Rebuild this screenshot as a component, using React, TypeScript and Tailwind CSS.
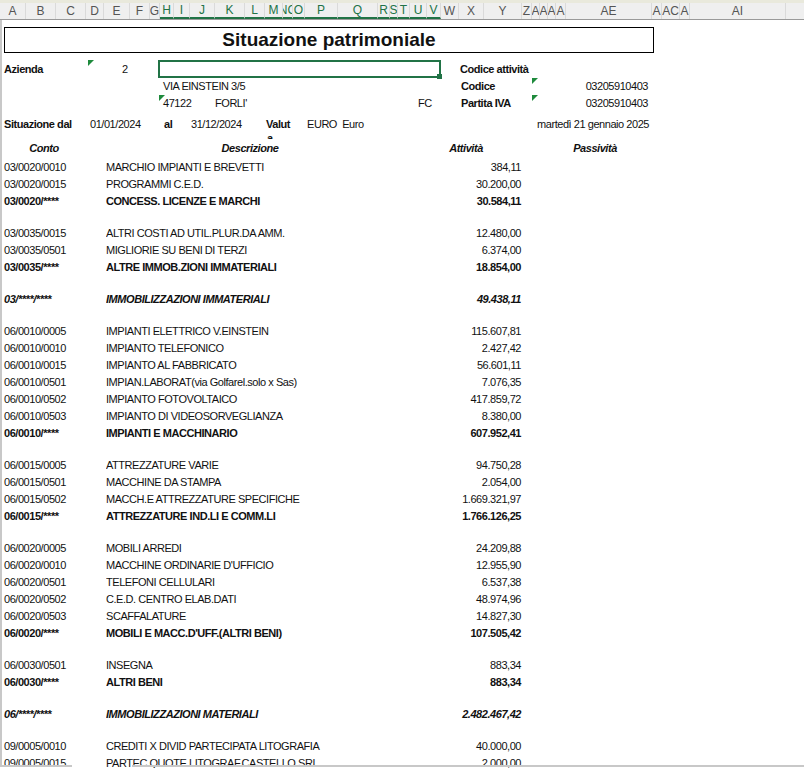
import React from "react";

type Row = [string, string, string, ("n" | "b" | "t")?] | null;

const COLS: [string, number, boolean?][] = [
  ["A", 26], ["B", 30], ["C", 30], ["D", 18], ["E", 26], ["F", 20], ["G", 10],
  ["H", 14, true], ["I", 16, true], ["J", 25, true], ["K", 30, true], ["L", 20, true], ["M", 18, true],
  ["NC", 10, true], ["O", 12, true], ["P", 33, true], ["Q", 40, true], ["R", 12, true], ["S", 8, true],
  ["T", 12, true], ["U", 17, true], ["V", 14, true], ["W", 18], ["X", 25], ["Y", 38], ["Z", 10],
  ["A", 8], ["A", 8], ["A", 8], ["A", 10], ["AE", 86], ["A", 10], ["AC", 18], ["A", 10], ["AI", 96],
];

const ROWS: Row[] = [
  ["03/0020/0010", "MARCHIO IMPIANTI E BREVETTI", "384,11"],
  ["03/0020/0015", "PROGRAMMI C.E.D.", "30.200,00"],
  ["03/0020/****", "CONCESS. LICENZE E MARCHI", "30.584,11", "b"],
  null,
  ["03/0035/0015", "ALTRI COSTI AD UTIL.PLUR.DA AMM.", "12.480,00"],
  ["03/0035/0501", "MIGLIORIE SU BENI DI TERZI", "6.374,00"],
  ["03/0035/****", "ALTRE IMMOB.ZIONI IMMATERIALI", "18.854,00", "b"],
  null,
  ["03/****/****", "IMMOBILIZZAZIONI IMMATERIALI", "49.438,11", "t"],
  null,
  ["06/0010/0005", "IMPIANTI ELETTRICO V.EINSTEIN", "115.607,81"],
  ["06/0010/0010", "IMPIANTO TELEFONICO", "2.427,42"],
  ["06/0010/0015", "IMPIANTO AL FABBRICATO", "56.601,11"],
  ["06/0010/0501", "IMPIAN.LABORAT(via Golfarel.solo x Sas)", "7.076,35"],
  ["06/0010/0502", "IMPIANTO FOTOVOLTAICO", "417.859,72"],
  ["06/0010/0503", "IMPIANTO DI VIDEOSORVEGLIANZA", "8.380,00"],
  ["06/0010/****", "IMPIANTI E MACCHINARIO", "607.952,41", "b"],
  null,
  ["06/0015/0005", "ATTREZZATURE VARIE", "94.750,28"],
  ["06/0015/0501", "MACCHINE DA STAMPA", "2.054,00"],
  ["06/0015/0502", "MACCH.E ATTREZZATURE SPECIFICHE", "1.669.321,97"],
  ["06/0015/****", "ATTREZZATURE IND.LI E COMM.LI", "1.766.126,25", "b"],
  null,
  ["06/0020/0005", "MOBILI ARREDI", "24.209,88"],
  ["06/0020/0010", "MACCHINE ORDINARIE D'UFFICIO", "12.955,90"],
  ["06/0020/0501", "TELEFONI CELLULARI", "6.537,38"],
  ["06/0020/0502", "C.E.D. CENTRO ELAB.DATI", "48.974,96"],
  ["06/0020/0503", "SCAFFALATURE", "14.827,30"],
  ["06/0020/****", "MOBILI E MACC.D'UFF.(ALTRI BENI)", "107.505,42", "b"],
  null,
  ["06/0030/0501", "INSEGNA", "883,34"],
  ["06/0030/****", "ALTRI BENI", "883,34", "b"],
  null,
  ["06/****/****", "IMMOBILIZZAZIONI MATERIALI", "2.482.467,42", "t"],
  null,
  ["09/0005/0010", "CREDITI X DIVID PARTECIPATA LITOGRAFIA", "40.000,00"],
  ["09/0005/0015", "PARTEC.QUOTE LITOGRAF.CASTELLO SRL", "2.000,00"],
];

// green error-check marker in the cell's top-left corner
function Tri() {
  return <span className="inline-block h-0 w-0 border-r-[6px] border-t-[6px] border-r-transparent border-t-[#1e8a3c] align-top" />;
}

export default function App() {
  return (
    <div
      className="relative h-[768px] w-[804px] overflow-hidden bg-white text-[11px] tracking-[-0.45px] text-[#111]"
      style={{ fontFamily: '"Liberation Sans", Arial, sans-serif' }}
    >
      <div className="h-[3px] bg-[#e9e9dc]" />
      <div className="flex h-[17px] border-b border-[#9a9a9a] bg-[#efefef] text-[12px] tracking-normal">
        {COLS.map(([l, w, sel], i) => (
          <div
            key={i}
            style={{ width: w }}
            className={`flex shrink-0 items-center justify-center overflow-hidden whitespace-nowrap border-r border-[#dadada] ${
              sel ? "border-b-2 border-b-[#217346] text-[#217346]" : "text-[#555]"
            }`}
          >
            {l}
          </div>
        ))}
      </div>

      <div className="h-[745px] border-l-2 border-[#c8c8c8] pl-[2px]">
        <div className="pt-[7px]">
          <div className="flex h-[26px] w-[650px] items-center justify-center border border-black text-[19px] font-bold tracking-normal">
            Situazione patrimoniale
          </div>
        </div>

        <div className="mt-[7px] flex h-[18px] items-center">
          <span className="w-[84px] font-bold">Azienda</span>
          <span className="w-[34px] self-start"><Tri /></span>
          <span className="w-[36px]">2</span>
          <span className="relative h-[18px] w-[283px] border-2 border-[#217346]">
            <span className="absolute -bottom-[3px] -right-[3px] h-[5px] w-[5px] bg-[#217346]" />
          </span>
          <span className="ml-[19px] font-bold">Codice attività</span>
        </div>
        <div className="flex h-[17px] items-center">
          <span className="ml-[159px] w-[298px]">VIA EINSTEIN 3/5</span>
          <span className="w-[71px] font-bold">Codice</span>
          <span className="self-start"><Tri /></span>
          <span className="w-[110px] text-right">03205910403</span>
        </div>
        <div className="flex h-[16px] items-center">
          <span className="ml-[155px] w-[4px] self-start"><Tri /></span>
          <span className="w-[52px]">47122</span>
          <span className="w-[203px]">FORLI'</span>
          <span className="w-[43px]">FC</span>
          <span className="w-[71px] font-bold">Partita IVA</span>
          <span className="self-start"><Tri /></span>
          <span className="w-[110px] text-right">03205910403</span>
        </div>
        <div className="mt-[5px] flex h-[17px] items-center whitespace-nowrap">
          <span className="w-[86px] font-bold">Situazione dal</span>
          <span className="w-[74px]">01/01/2024</span>
          <span className="w-[27px] font-bold">al</span>
          <span className="w-[75px]">31/12/2024</span>
          <span className="w-[41px] font-bold">Valut</span>
          <span className="w-[225px]">EURO&nbsp; Euro</span>
          <span className="w-[117px] text-right">martedì 21 gennaio 2025</span>
        </div>
        <div className="h-[6px] overflow-hidden pl-[263px] font-bold leading-[10px]">a</div>
        <div className="flex h-[18px] items-center font-bold italic">
          <span className="w-[80px] text-center">Conto</span>
          <span className="w-[332px] text-center">Descrizione</span>
          <span className="w-[100px] text-center">Attività</span>
          <span className="w-[158px] text-center">Passività</span>
        </div>

        <div className="mt-[2px]">
          {ROWS.map((r, i) =>
            r === null ? (
              <div key={i} className="h-[15px]" />
            ) : (
              <div
                key={i}
                className={`flex h-[17px] items-center whitespace-nowrap ${
                  r[3] === "b" ? "font-bold" : r[3] === "t" ? "font-bold italic" : ""
                }`}
              >
                <span className="w-[102px]">{r[0]}</span>
                <span className="w-[260px] overflow-hidden">{r[1]}</span>
                <span className="w-[155px] text-right">{r[2]}</span>
              </div>
            )
          )}
        </div>
      </div>
      <div className="absolute bottom-[1px] left-0 h-[2px] w-[72px] bg-[#c8c8c8]" />
      <div className="absolute bottom-[1px] left-[132px] h-[2px] w-[672px] bg-[#c8c8c8]" />
    </div>
  );
}
